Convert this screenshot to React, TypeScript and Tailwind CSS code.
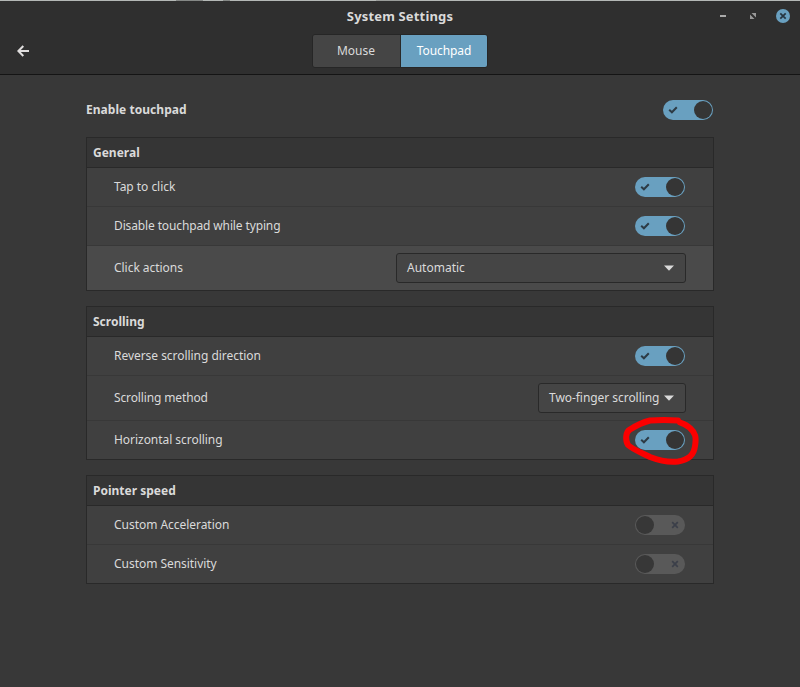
import type { ReactNode } from "react";

function Toggle({ on }: { on: boolean }) {
  return on ? (
    <span role="switch" aria-checked="true" className="flex h-5 w-[50px] shrink-0 items-center justify-between rounded-full bg-[#69a0c0] pr-px pl-[5px]">
      <svg width="10" height="8" viewBox="0 0 10 8" fill="none">
        <path d="M1.2 3.8 3.9 6.3 8.8 1.3" stroke="#2d3b45" strokeWidth="2" />
      </svg>
      <span className="size-[18px] rounded-full bg-[#353535]" />
    </span>
  ) : (
    <span role="switch" aria-checked="false" className="flex h-5 w-[50px] shrink-0 items-center justify-between rounded-full bg-[#595959] pr-[6px] pl-px">
      <span className="size-[18px] rounded-full bg-[#373737]" />
      <svg width="8" height="8" viewBox="0 0 8 8" fill="none">
        <path d="M1.2 1.2 6.8 6.8M6.8 1.2 1.2 6.8" stroke="#3b3f49" strokeWidth="1.7" />
      </svg>
    </span>
  );
}

function Select({ label, wide }: { label: string; wide?: boolean }) {
  return (
    <button className={`-mr-px flex h-[30px] items-center justify-between rounded-[3px] border border-[#292929] bg-[#454545] pr-[11px] pl-[10px] ${wide ? "w-[290px]" : "w-[148px] tracking-[-0.05px]"}`}>
      <span>{label}</span>
      <svg width="10" height="6" viewBox="0 0 10 6">
        <path d="M0 .5H10L5 5.7Z" fill="#dadada" />
      </svg>
    </button>
  );
}

function Row({ label, children, tall, last, lit, tight }: { label: string; children: ReactNode; tall?: boolean; last?: boolean; lit?: boolean; tight?: boolean }) {
  return (
    <div className={`flex items-center justify-between pr-[28px] pl-[27px] ${tall ? "h-11" : "h-[38px]"} ${last ? "" : "box-content border-b border-[#383838]"} ${lit ? "bg-[#4a4a4a]" : "bg-[#404040]"}`}>
      <span className={tight ? "tracking-[-0.13px]" : "tracking-[-0.04px]"}>{label}</span>
      {children}
    </div>
  );
}

function Section({ title, children }: { title: string; children: ReactNode }) {
  return (
    <section className="border border-[#292929]">
      <h2 className="flex h-[30px] items-center border-b border-[#292929] bg-[#353535] pl-[6px] font-bold">{title}</h2>
      {children}
    </section>
  );
}

export default function App() {
  return (
    <div className="flex h-[687px] w-[800px] flex-col overflow-hidden bg-[#383838] font-['Noto_Sans',sans-serif] text-[12px] leading-4 text-[#dadada]">
      <div className="flex h-px shrink-0 bg-[#b4b8b6]">
        <span className="ml-[176px] w-[27px] bg-[#858886]" />
        <span className="ml-5 w-[7px] bg-[#858886]" />
        <span className="ml-[146px] w-[34px] bg-[#999c9a]" />
      </div>
      <header className="h-[74px] shrink-0 border-b border-[#141414] bg-[#2f2f2f]">
        <div className="grid h-[29px] grid-cols-[1fr_auto_1fr] items-center">
          <span />
          <h1 className="text-[13px] font-bold tracking-[0.16px]">System Settings</h1>
          <div className="flex items-center justify-end pr-[10px]">
            <svg width="6" height="2" className="mr-[24px]"><path d="M0 0H6V2H0Z" fill="#aaa" /></svg>
            <svg width="6" height="6" viewBox="0 0 6 6" className="mr-[20px]">
              <path d="M1.5 0H6V4.500ZM0 1.5 4.5 6H0Z" fill="#999" />
            </svg>
            <svg width="14" height="14" viewBox="0 0 14 14">
              <circle cx="7" cy="7" r="7" fill="#69a0c0" />
              <path d="M4.3 4.3 9.7 9.7M9.7 4.3 4.3 9.7" stroke="#263642" strokeWidth="1.7" />
            </svg>
          </div>
        </div>
        <div className="grid grid-cols-[1fr_auto_1fr] items-center pt-1">
          <svg width="12" height="12" viewBox="0 0 12 12" fill="none" className="ml-[17px]">
            <path d="M6.3 1 1.4 6l4.9 5M1.5 6H12" stroke="#e0dede" strokeWidth="2" />
          </svg>
          <div className="flex h-[34px] w-[176px] overflow-hidden rounded-[3px] border border-[#262626]">
            <button className="w-[88px] border-r border-[#292929] bg-[#454545] pr-px">Mouse</button>
            <button className="flex-1 bg-[#69a0c0] tracking-[-0.08px] text-white">Touchpad</button>
          </div>
          <span />
        </div>
      </header>
      <main className="relative mx-[86px] flex w-[628px] flex-col gap-[15px] pt-[25px]">
        <div className="mb-[2px] flex h-5 items-center justify-between pr-px">
          <h2 className="font-bold tracking-[0.04px]">Enable touchpad</h2>
          <Toggle on />
        </div>
        <Section title="General">
          <Row label="Tap to click"><Toggle on /></Row>
          <Row label="Disable touchpad while typing" tight><Toggle on /></Row>
          <Row label="Click actions" tall last lit><Select label="Automatic" wide /></Row>
        </Section>
        <Section title="Scrolling">
          <Row label="Reverse scrolling direction"><Toggle on /></Row>
          <Row label="Scrolling method" tall tight><Select label="Two-finger scrolling" /></Row>
          <Row label="Horizontal scrolling" last><Toggle on /></Row>
        </Section>
        <Section title="Pointer speed">
          <Row label="Custom Acceleration"><Toggle on={false} /></Row>
          <Row label="Custom Sensitivity" last><Toggle on={false} /></Row>
        </Section>
        <svg className="absolute top-[335px] left-[524px]" width="100" height="60" viewBox="0 0 100 60" fill="none">
          <path d="M68 10.500C62 10 51 9.500 40 10.500C34 12 27 15 20 19.500C15 22 15.500 31 18 35C22 39 32 43 40 47C49 50.500 59 52.500 68 51.500C78 50 84 45 85 36C86.500 27 85.500 23 80 18C77 15 73 13.500 70 12.500" stroke="#fb0000" strokeWidth="6" strokeLinecap="round" strokeLinejoin="round" />
        </svg>
      </main>
    </div>
  );
}
